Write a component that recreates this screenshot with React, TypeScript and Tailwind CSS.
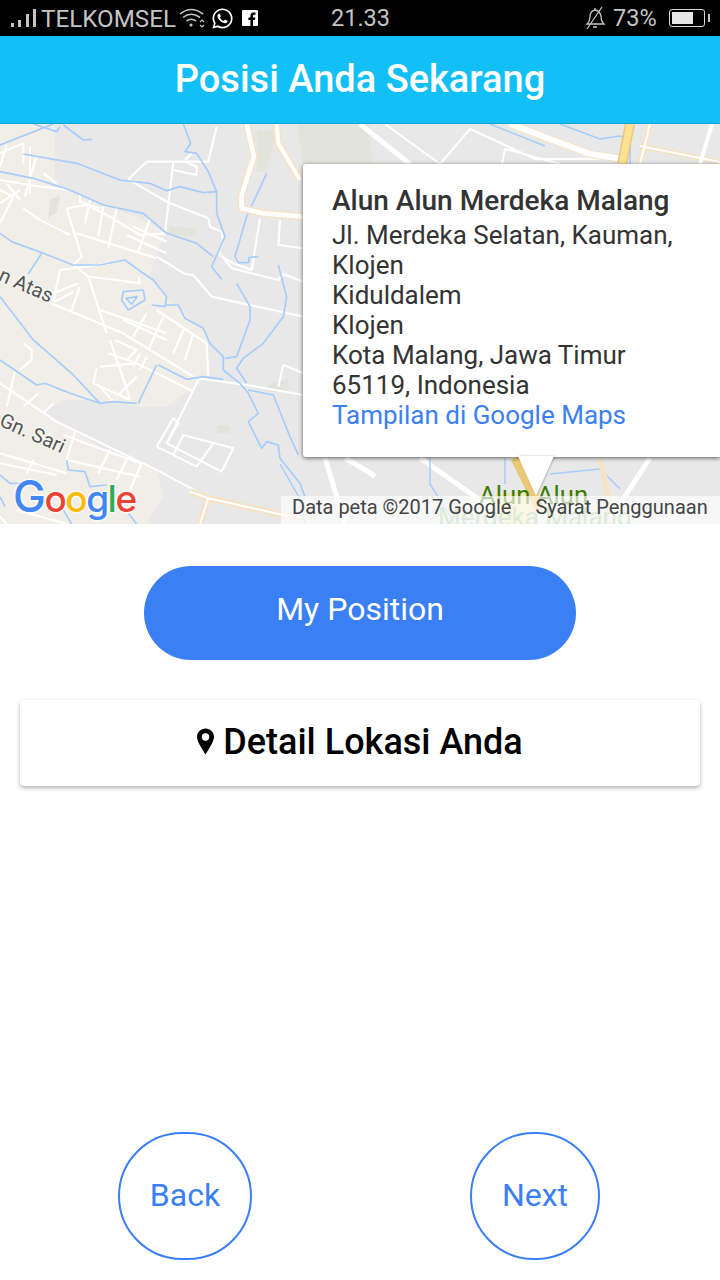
import { FaWhatsapp } from 'react-icons/fa';

const beige =
  'M0 12 L165 12 L165 190 L240 230 L410 290 L500 340 L470 400 L450 470 L500 530 L620 640 L625 770 L500 860 L420 860 L300 840 L190 840 L130 880 L300 980 L470 1050 L490 1130 L440 1212 L0 1212 Z';

const waterPaths = [
  'M0 155 L100 175 L210 210 L310 255 L430 280 L500 340 L590 370 L640 410',
  'M70 102 L230 130 L360 180 L450 190 L500 212 L540 200 L610 218 L650 215 L650 280 L675 350 L635 440 L665 478',
  'M550 12 L572 70 L555 95 L590 100 L625 155 L650 215',
  'M0 340 L35 365 L130 400 L220 435 L300 435 L375 420 L430 460 L460 480 L500 530 L495 560 L455 555 M495 555 L535 555 L555 595 L610 625 L630 670 L670 710 L670 750 L720 790 L745 820 L775 880 L745 905 L785 985 L800 965 L835 975 L840 1015 L900 1090 L915 1130',
  'M0 530 L100 660 L220 765 L300 850 L340 845 L410 850',
  'M0 720 L110 795 L135 790 L210 820 L300 850',
  'M710 490 L750 560 L750 600 L710 710 L675 715',
  'M835 435 L860 530 L850 590 L790 670 L730 715 L710 745 L740 790',
  'M745 810 L820 825 L850 900 L870 950 L895 1005',
  'M800 160 L740 290 L705 410 L715 428 L745 428 L748 412 L775 410',
  'M125 400 L85 462',
  'M370 515 L430 510 L435 540 L385 570 L365 540 Z',
  'M378 535 L412 530 L395 552 Z',
  'M475 735 L560 778 L610 770 L670 778',
  'M470 735 L415 850',
  'M0 75 L160 12 M100 12 L170 35 L180 20 M190 15 L250 60 L275 58',
  'M200 1020 L205 1050 L255 1055 L270 1100 L320 1095',
  'M0 1065 L30 1090 L60 1090 M190 1170 L215 1212 M385 1180 L410 1212 M0 1130 L15 1160',
];

const roads = [
  'M0 100 L70 70 L70 130 M20 75 L0 140 M90 80 L90 220 M110 105 L75 230 M0 180 L120 200 L210 210',
  'M0 210 L40 230 L0 310 M20 190 L60 240 M0 250 L60 210 M130 160 L170 190 M70 265 L120 300 L210 345',
  'M200 265 L245 410 L220 435 L265 470 L320 640',
  'M200 265 L260 255 L330 290 L420 345 L500 340 M240 225 L240 245 L300 265 M270 240 L255 310 M310 260 L295 350 M350 265 L325 385',
  'M230 340 L470 415 M400 320 L500 365 M450 295 L415 395 M380 345 L500 400',
  'M385 178 L440 125 L520 125 L625 125 L650 20 M520 125 L495 340 M385 178 L500 245 L625 295 L630 320 L665 335 L670 365 L655 395 L695 445 L835 480 L850 462 L910 485',
  'M555 125 L590 140 L590 165 L520 150 M575 100 L555 120',
  'M470 410 L555 462 L580 465 L635 530 L910 590',
  'M180 450 L330 430 M180 450 L160 545 M240 500 L215 570 M160 520 L235 490 M165 545 L220 515 M265 470 L350 480 L420 490 L415 470',
  'M130 540 L370 640 L580 770 M300 570 L500 640 M470 570 L620 670 L625 770',
  'M330 660 L390 835 M345 660 L410 690 L380 720 M325 700 L410 730 L580 815 M290 745 L280 790 L390 840 M300 740 L410 730 M410 770 L355 825',
  'M440 580 L400 650 M490 590 L445 690 M550 630 L520 700 M580 640 L555 720 M370 600 L500 660 M420 700 L400 740 M440 710 L420 750',
  'M595 780 L500 970 M470 980 L520 895 L535 910 L500 970 L665 1055 L700 985 L550 945 L520 1005 L590 1040 L640 970 M470 980 L590 1040',
  'M595 775 L740 795 L910 825 M850 735 L835 800 M850 735 L910 760',
  'M650 400 L700 430 L755 450 L780 295 M840 300 L835 375 L910 385',
  'M0 790 L170 905 L470 1050 L620 1130 M20 860 L45 755 M70 860 L115 820 M130 880 L160 850 M60 750 L95 720 L95 690 L70 670',
  'M225 935 L200 1020 L420 1070 M190 945 L420 1030 M330 990 L295 1060 M380 1020 L350 1080 M425 1030 L390 1110 M0 1000 L200 1060 M0 1030 L170 1065 M100 1020 L80 1060',
  'M300 800 L340 845 M20 1212 L0 1190 M50 1170 L200 1212',
];

function MapArt() {
  return (
    <svg viewBox="0 0 720 400" className="block h-full w-full">
      <rect width="720" height="400" fill="#e8e8e8" />
      <g transform="translate(0,-4) scale(0.3333)" fill="none" strokeLinejoin="round">
        <path d={beige} fill="#f0eee6" />
        <path d="M150 240 L180 225 L170 280 L145 290 Z M505 318 L590 325 L585 350 L510 345 Z M650 915 L690 915 L690 940 L650 940 Z M805 795 L865 775 L865 815 L805 815 Z" fill="#e2e4dc" />
        <path d="M770 30 L830 30 L800 155 L770 155 Z" fill="#e2e4dc" />
        {roads.map((d, i) => (
          <path key={i} d={d} stroke="#ffffff" strokeWidth="6.5" />
        ))}
        {waterPaths.map((d, i) => (
          <path key={i} d={d} stroke="#a5cdfb" strokeWidth="5" />
        ))}
        <path d="M740 12 L762 110 L725 225 L725 265 L790 280 L910 290" stroke="#f5e3c8" strokeWidth="24" />
        <path d="M740 12 L762 110 L725 225 L725 265 L790 280 L910 290" stroke="#ffffff" strokeWidth="14" />
        <path d="M830 12 L835 70 L900 180" stroke="#f5e3c8" strokeWidth="24" />
        <path d="M830 12 L835 70 L900 180" stroke="#ffffff" strokeWidth="12" />
        <path d="M570 1115 L625 1135 L850 1185 L930 1195 M625 1135 L600 1212" stroke="#f5e3c8" strokeWidth="20" />
        <path d="M570 1115 L625 1135 L850 1185 L930 1195 M625 1135 L600 1212" stroke="#ffffff" strokeWidth="6" />
      </g>
      {/* right part, behind and above the info window */}
      <g fill="none" strokeLinejoin="round">
        <path d="M297 0 L370 0 L372 40 L303 40 Z" fill="#e2e4dc" />
        <path d="M360 0 L410 40" stroke="#ffffff" strokeWidth="5" />
        <path d="M385 0 L440 40 M440 40 L470 5 L535 35 L600 35 M502 40 L505 25 L560 40" stroke="#ffffff" strokeWidth="2" />
        <path d="M510 0 L590 30 L623 35" stroke="#f5e3c8" strokeWidth="8" />
        <path d="M510 0 L590 30 L623 35" stroke="#ffffff" strokeWidth="6" />
        <path d="M490 0 L545 22 M560 0 L600 15 L620 12 L630 16 L630 40" stroke="#a5cdfb" strokeWidth="1.5" />
        <path d="M630 0 L622 40" stroke="#e9c877" strokeWidth="10" />
        <path d="M630 0 L622 40" stroke="#fde293" strokeWidth="7" />
        <path d="M650 0 L640 40 M640 22 L720 38" stroke="#f5e3c8" strokeWidth="6" />
        <path d="M650 0 L640 40 M640 22 L720 38" stroke="#ffffff" strokeWidth="2" />
        <path d="M712 0 L700 40" stroke="#ffffff" strokeWidth="4" />
        {/* below the info window */}
        <path d="M325 334 L345 400 M420 334 L500 390 M345 334 L375 352 M600 334 L615 400 M650 334 L610 395" stroke="#ffffff" strokeWidth="5" />
        <path d="M280 340 L300 375 L305 400 M430 334 L430 360 L455 400 M505 334 L505 360 M550 350 L600 345 L620 365" stroke="#a5cdfb" strokeWidth="1.5" />
        <path d="M495 370 L540 368 L530 400 L500 400 Z" fill="#f3e4b5" />
        <path d="M515 334 L540 385" stroke="#e9c877" strokeWidth="9" />
        <path d="M600 334 L610 380" stroke="#f5e3c8" strokeWidth="6" />
      </g>
    </svg>
  );
}

function StatusBar() {
  return (
    <div className="flex h-9 items-center bg-black pl-[11px] pr-[13px] pt-[2px] text-[23.5px] leading-none text-[#c4c4c4]">
      <svg width="26" height="19" viewBox="0 0 26 19" className="mr-[4px] -mt-[2px]" fill="#c4c4c4">
        <rect x="0" y="14" width="3" height="4" />
        <rect x="7" y="11" width="3" height="7" />
        <rect x="15" y="5" width="3" height="13" />
        <rect x="22" y="0" width="3" height="18" />
      </svg>
      <span className="w-[138px] text-[24.2px]">TELKOMSEL</span>
      <svg width="26" height="20" viewBox="0 0 26 20" fill="none" stroke="#c4c4c4" strokeWidth="1.6" className="mr-[6px] -mt-[2px]">
        <path d="M1 6 Q12 -3 24 6" />
        <path d="M4 9.5 Q12 3 21 9.5" />
        <path d="M7.5 13 Q12 9.5 17 13" />
        <circle cx="12" cy="17" r="1.6" fill="#c4c4c4" stroke="none" />
        <path d="M21 14 L23 12 L25 14 M21 17 L23 19 L25 17" strokeWidth="1.2" />
      </svg>
      <FaWhatsapp className="mr-[8px] -mt-[2px] text-[23px] text-white" />
      <svg width="16" height="16" viewBox="0 0 16 16" className="-mt-[2px] shrink-0">
        <path d="M1 0 H15 A1 1 0 0 1 16 1 V15 A1 1 0 0 1 15 16 H11 V10 H13 L13.4 7.5 H11 V6 Q11 4.8 12.2 4.8 H13.5 V2.6 H11.5 Q8.4 2.6 8.4 5.8 V7.5 H6.4 V10 H8.4 V16 H1 A1 1 0 0 1 0 15 V1 A1 1 0 0 1 1 0 Z" fill="#ffffff" />
      </svg>
      <span className="ml-[73px]">21.33</span>
      <svg width="22" height="24" viewBox="0 0 22 24" fill="none" stroke="#c4c4c4" strokeWidth="1.3" className="ml-[194px] -mt-[2px]">
        <path d="M3 18 Q6 15 6 11 Q6 5 11 4 Q16 5 17 10 Q17 15 20 18 Z" />
        <path d="M9 21 H13 M11 2 V4 M18 1 L3 23" />
      </svg>
      <span className="ml-[7px]">73%</span>
      <div className="relative ml-[12px] -mt-[2px] flex h-[18px] w-[36px] items-center rounded-[3px] border border-[#d8d8d8] p-[2px]">
        <div className="h-full w-[70%] bg-[#e6e6e6]" />
        <div className="absolute -right-[6px] top-[4px] h-[8px] w-[2px] bg-[#c4c4c4]" />
      </div>
    </div>
  );
}

function GoogleLogo() {
  return (
    <div className="absolute bottom-[1px] left-[13px] font-['Inter',sans-serif] text-[37px] font-medium leading-[48px] tracking-[-1.5px] [text-shadow:0_0_3px_#ffffff,0_0_3px_#ffffff,0_0_3px_#ffffff]">
      <span className="text-[44px] text-[#4285f4]">G</span>
      <span className="text-[#ea4335]">o</span>
      <span className="text-[#fbbc05]">o</span>
      <span className="text-[#4285f4]">g</span>
      <span className="text-[#34a853]">l</span>
      <span className="text-[#ea4335]">e</span>
    </div>
  );
}

function InfoWindow() {
  return (
    <div className="absolute left-[303px] right-0 top-[40px] h-[293px] rounded-l-[3px] bg-white pl-[29px] pt-[18px] text-[26px] leading-[30px] text-[#333333] shadow-[0_1px_4px_rgba(0,0,0,0.6)]">
      <div className="mb-px text-[28px] font-medium leading-[37px]">Alun Alun Merdeka Malang</div>
      <div>Jl. Merdeka Selatan, Kauman,</div>
      <div>Klojen</div>
      <div>Kiduldalem</div>
      <div>Klojen</div>
      <div>Kota Malang, Jawa Timur</div>
      <div>65119, Indonesia</div>
      <div className="text-[#3b7ff0]">Tampilan di Google Maps</div>
    </div>
  );
}

function RoundButton({ label, className }: { label: string; className: string }) {
  return (
    <button className={`flex h-[128px] items-center justify-center rounded-full border-2 border-[#3b7ff5] pb-[2px] text-[32px] text-[#3b7ff5] ${className}`}>
      {label}
    </button>
  );
}

export default function App() {
  return (
    <div className="flex h-[1280px] w-[720px] flex-col overflow-hidden bg-white font-['Roboto',sans-serif]">
      <StatusBar />
      <header className="flex h-[88px] items-center justify-center border-b border-[#0ea5d8] bg-[#12c0f7] pb-[1px] text-[38px] font-medium text-white">
        Posisi Anda Sekarang
      </header>

      <div className="relative h-[400px] shrink-0 overflow-hidden">
        <MapArt />
        <div className="absolute -left-[2px] top-[149px] rotate-[24deg] text-[20px] leading-6 text-[#555555] [text-shadow:0_0_3px_#ffffff,0_0_3px_#ffffff]">n Atas</div>
        <div className="absolute -left-[2px] top-[297px] rotate-[24deg] text-[20px] leading-6 text-[#555555] [text-shadow:0_0_3px_#ffffff,0_0_3px_#ffffff]">Gn. Sari</div>
        <div className="absolute left-[479px] top-[356px] text-[25.7px] leading-[30px] text-[#3d7a00]">Alun Alun</div>
        <div className="absolute left-[438px] top-[378px] text-[26px] leading-[30px] text-[#9fc48a]">Merdeka Malang</div>
        <div className="absolute left-[281px] top-[372px] flex h-[28px] w-[439px] items-center bg-white/65 pb-[7px] pl-[11px] text-[20px] text-[#444444]">
          <span>Data peta ©2017 Google</span>
          <span className="ml-[24px]">Syarat Penggunaan</span>
        </div>
        <GoogleLogo />
        <InfoWindow />
        <div className="absolute left-[518px] top-[332px] h-0 w-0 border-l-[18px] border-r-[18px] border-t-[40px] border-l-transparent border-r-transparent border-t-white drop-shadow-[1px_0_1px_rgba(0,0,0,0.25)]" />
      </div>

      <div className="mt-[42px] flex justify-center">
        <button className="flex h-[94px] w-[432px] items-center justify-center rounded-full bg-[#3b7ff5] pb-[9px] text-[32px] text-white">
          My Position
        </button>
      </div>

      <div className="mx-5 mt-10 flex h-[86px] items-center justify-center gap-[9px] rounded-[4px] bg-white pb-[2px] text-[36px] font-medium text-black shadow-[0_2px_4px_rgba(0,0,0,0.3)]">
        <svg width="17" height="27" viewBox="0 0 17 26" className="mb-[2px]">
          <path fillRule="evenodd" d="M8.5 0 C13.2 0 17 3.7 17 8.4 C17 13 12 20 8.5 26 C5 20 0 13 0 8.4 C0 3.7 3.8 0 8.5 0 Z M8.5 4.8 A3.7 3.7 0 1 0 8.5 12.2 A3.7 3.7 0 1 0 8.5 4.8 Z" fill="#000000" />
        </svg>
        <span>Detail Lokasi Anda</span>
      </div>

      <div className="mt-[346px] flex">
        <RoundButton label="Back" className="ml-[118px] w-[134px]" />
        <RoundButton label="Next" className="ml-[218px] w-[130px]" />
      </div>
    </div>
  );
}
